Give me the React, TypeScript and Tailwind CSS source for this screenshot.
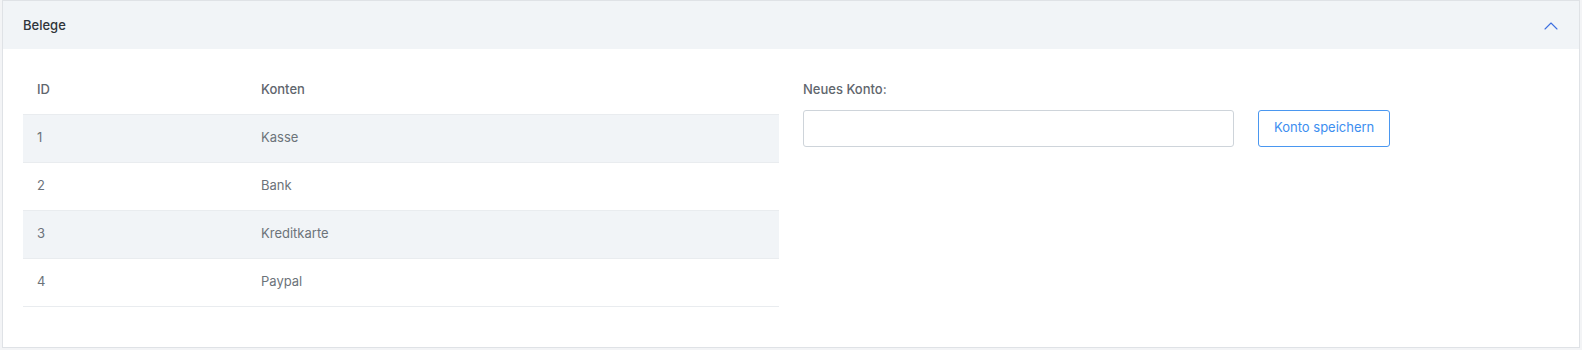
import { ChevronUp } from 'lucide-react';

const konten = [
  { id: 1, name: 'Kasse' },
  { id: 2, name: 'Bank' },
  { id: 3, name: 'Kreditkarte' },
  { id: 4, name: 'Paypal' },
];

export default function App() {
  return (
    <div className="min-h-[350px] bg-[#f3f4f6] px-[2px]" style={{ fontFamily: 'Inter, "Open Sans", sans-serif' }}>
      <div className="bg-white border border-[#dfe2e6]">
        {/* Kopfzeile */}
        <div className="h-[48px] flex items-center justify-between pl-5 pr-[16px] pt-[2px] bg-[#f1f4f7]">
          <span className="text-[13px] font-medium text-[#2f343a]">Belege</span>
          <ChevronUp className="w-6 h-6 text-[#3d6fe0]" strokeWidth={1.1} />
        </div>

        <div className="grid grid-cols-2 gap-6 px-5 pt-[17px] pb-10">
          <table className="w-full text-[13px] text-left border-collapse">
            <thead>
              <tr className="h-[48px]">
                <th className="w-[224px] pl-[14px] font-medium text-[#5f666d]">ID</th>
                <th className="pl-[14px] font-medium text-[#5f666d]">Konten</th>
              </tr>
            </thead>
            <tbody>
              {konten.map((k, i) => (
                <tr key={k.id} className={`h-[48px] border-t border-[#e9ecef] ${i % 2 === 0 ? 'bg-[#f1f4f7]' : 'bg-white'} ${i === konten.length - 1 ? 'border-b' : ''}`}>
                  <td className="pl-[14px] text-[#6c737a]">{k.id}</td>
                  <td className="pl-[14px] text-[#6c737a]">{k.name}</td>
                </tr>
              ))}
            </tbody>
          </table>

          <div>
            <label className="block text-[13px] font-medium text-[#5f666d] mt-[14px] mb-[10px]">Neues Konto:</label>
            <div className="flex items-center gap-6">
              <input type="text" className="w-[431px] h-[37px] border border-[#ced4da] rounded-[3px] px-3 text-[13px] focus:outline-none" />
              <button type="button" className="h-[37px] px-[15px] border border-[#4a97f0] rounded-[3px] text-[13px] text-[#3d8ef0] bg-white">
                Konto speichern
              </button>
            </div>
          </div>
        </div>
      </div>
    </div>
  );
}
